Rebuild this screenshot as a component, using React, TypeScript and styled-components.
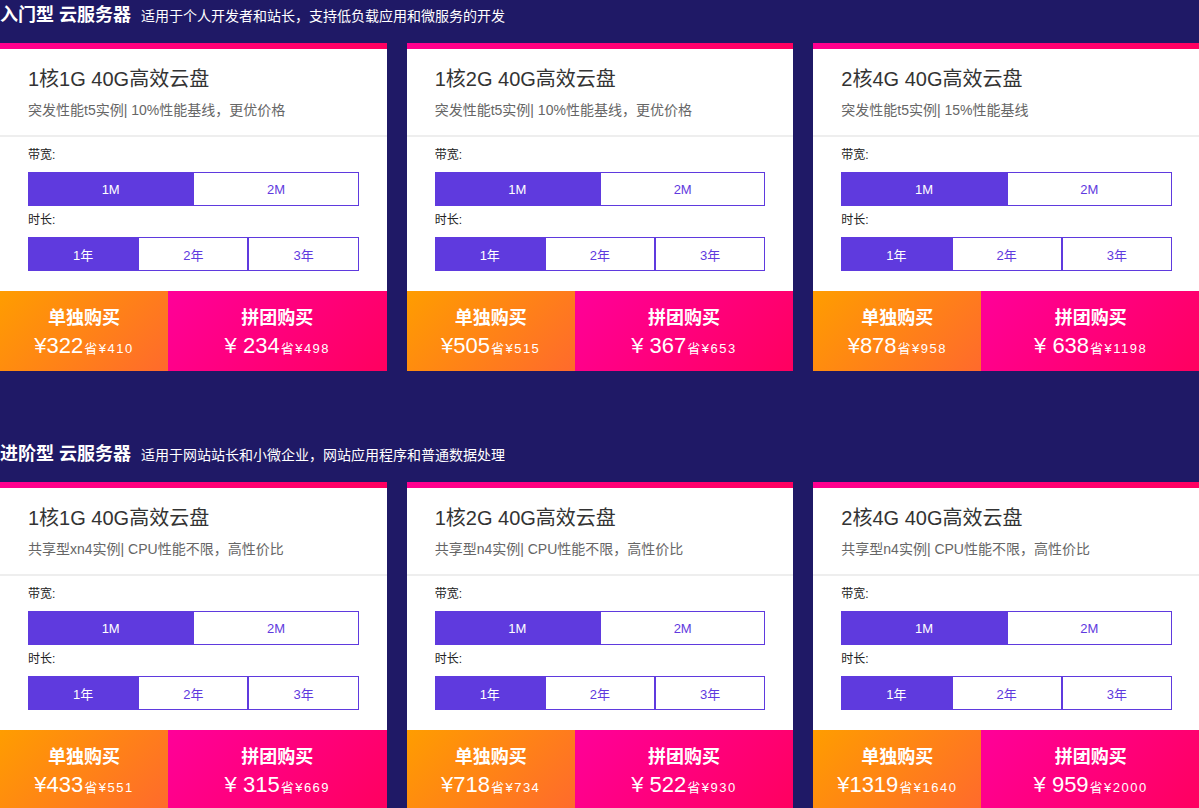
import React from "react";
import styled, { createGlobalStyle } from "styled-components";

const GlobalStyle = createGlobalStyle`
  html, body {
    margin: 0;
    padding: 0;
    background: #1f1966;
    overflow-x: hidden;
  }
  body {
    font-family: "Liberation Sans", "Noto Sans CJK SC", sans-serif;
    color: #333;
  }
  * { box-sizing: border-box; }
`;

const Page = styled.div`
  width: 1200px;
  background: #1f1966;
  padding-bottom: 40px;
`;

const Section = styled.section`
  margin-bottom: 68px;
`;

const SectionHeader = styled.div`
  display: flex;
  align-items: baseline;
  gap: 10px;
  height: 43px;
  padding-top: 1px;
`;

const SectionTitle = styled.h2`
  margin: 0;
  font-size: 18px;
  line-height: 28px;
  font-weight: bold;
  color: #fff;
`;

const SectionDesc = styled.span`
  font-size: 14px;
  color: #fff;
`;

const Grid = styled.div`
  display: grid;
  grid-template-columns: repeat(3, 1fr);
  column-gap: 20px;
`;

const Card = styled.div`
  background: #fff;
  border-top: 6px solid transparent;
  border-image: linear-gradient(90deg, #ff0090, #ff0060) 1;
  border-left: 0;
  border-right: 0;
  border-bottom: 0;
  display: flex;
  flex-direction: column;
`;

const CardHead = styled.div`
  padding: 16px 28px 15px;
  border-bottom: 2px solid #eeeeee;
`;

const CardTitle = styled.div`
  font-size: 20px;
  line-height: 28px;
  color: #333;
  margin-bottom: 7px;
`;

const CardDesc = styled.div`
  font-size: 14px;
  line-height: 20px;
  color: #666;
`;

const Options = styled.div`
  padding: 10px 28px 20px;
`;

const Label = styled.div`
  font-size: 12px;
  line-height: 16px;
  color: #222;
  margin-bottom: 9px;
`;

const ButtonRow = styled.div<{ $cols: number }>`
  display: grid;
  grid-template-columns: repeat(${(p) => p.$cols}, 1fr);
  margin-bottom: ${(p) => (p.$cols === 2 ? "6px" : "0")};
`;

const OptButton = styled.div<{ $active?: boolean }>`
  height: 34px;
  border: 1px solid #5f3ade;
  background: ${(p) => (p.$active ? "#5f3ade" : "#fff")};
  color: ${(p) => (p.$active ? "#fff" : "#5f3ade")};
  font-size: 13px;
  display: flex;
  align-items: center;
  justify-content: center;
`;

const Buy = styled.div`
  display: grid;
  grid-template-columns: 168px 1fr;
  height: 80px;
`;

const BuyBlock = styled.div<{ $group?: boolean }>`
  background: ${(p) =>
    p.$group
      ? "linear-gradient(135deg, #ff0099 0%, #ff005f 100%)"
      : "linear-gradient(135deg, #ff9d00 0%, #ff6a2c 100%)"};
  color: #fff;
  display: flex;
  flex-direction: column;
  align-items: center;
  padding-top: 15px;
`;

const BuyTitle = styled.div`
  font-size: 18px;
  font-weight: bold;
  line-height: 24px;
  margin-bottom: 3px;
`;

const PriceLine = styled.div`
  display: flex;
  align-items: baseline;
  white-space: nowrap;
`;

const Price = styled.span`
  font-size: 22px;
  line-height: 26px;
`;

const Save = styled.span`
  font-size: 13px;
  letter-spacing: 1.5px;
  margin-left: 1px;
`;

type Item = {
  title: string;
  desc: string;
  single: [string, string];
  group: [string, string];
};

const sections: { title: string; desc: string; items: Item[] }[] = [
  {
    title: "入门型 云服务器",
    desc: "适用于个人开发者和站长，支持低负载应用和微服务的开发",
    items: [
      { title: "1核1G 40G高效云盘", desc: "突发性能t5实例| 10%性能基线，更优价格", single: ["322", "410"], group: ["234", "498"] },
      { title: "1核2G 40G高效云盘", desc: "突发性能t5实例| 10%性能基线，更优价格", single: ["505", "515"], group: ["367", "653"] },
      { title: "2核4G 40G高效云盘", desc: "突发性能t5实例| 15%性能基线", single: ["878", "958"], group: ["638", "1198"] },
    ],
  },
  {
    title: "进阶型 云服务器",
    desc: "适用于网站站长和小微企业，网站应用程序和普通数据处理",
    items: [
      { title: "1核1G 40G高效云盘", desc: "共享型xn4实例| CPU性能不限，高性价比", single: ["433", "551"], group: ["315", "669"] },
      { title: "1核2G 40G高效云盘", desc: "共享型n4实例| CPU性能不限，高性价比", single: ["718", "734"], group: ["522", "930"] },
      { title: "2核4G 40G高效云盘", desc: "共享型n4实例| CPU性能不限，高性价比", single: ["1319", "1640"], group: ["959", "2000"] },
    ],
  },
];

function ProductCard({ item }: { item: Item }) {
  return (
    <Card>
      <CardHead>
        <CardTitle>{item.title}</CardTitle>
        <CardDesc>{item.desc}</CardDesc>
      </CardHead>
      <Options>
        <Label>带宽:</Label>
        <ButtonRow $cols={2}>
          <OptButton $active>1M</OptButton>
          <OptButton>2M</OptButton>
        </ButtonRow>
        <Label>时长:</Label>
        <ButtonRow $cols={3}>
          <OptButton $active>1年</OptButton>
          <OptButton>2年</OptButton>
          <OptButton>3年</OptButton>
        </ButtonRow>
      </Options>
      <Buy>
        <BuyBlock>
          <BuyTitle>单独购买</BuyTitle>
          <PriceLine>
            <Price>¥{item.single[0]}</Price>
            <Save>省¥{item.single[1]}</Save>
          </PriceLine>
        </BuyBlock>
        <BuyBlock $group>
          <BuyTitle>拼团购买</BuyTitle>
          <PriceLine>
            <Price>¥ {item.group[0]}</Price>
            <Save>省¥{item.group[1]}</Save>
          </PriceLine>
        </BuyBlock>
      </Buy>
    </Card>
  );
}

export default function App() {
  return (
    <>
      <GlobalStyle />
      <Page>
        {sections.map((s) => (
          <Section key={s.title}>
            <SectionHeader>
              <SectionTitle>{s.title}</SectionTitle>
              <SectionDesc>{s.desc}</SectionDesc>
            </SectionHeader>
            <Grid>
              {s.items.map((it, i) => (
                <ProductCard key={i} item={it} />
              ))}
            </Grid>
          </Section>
        ))}
      </Page>
    </>
  );
}
